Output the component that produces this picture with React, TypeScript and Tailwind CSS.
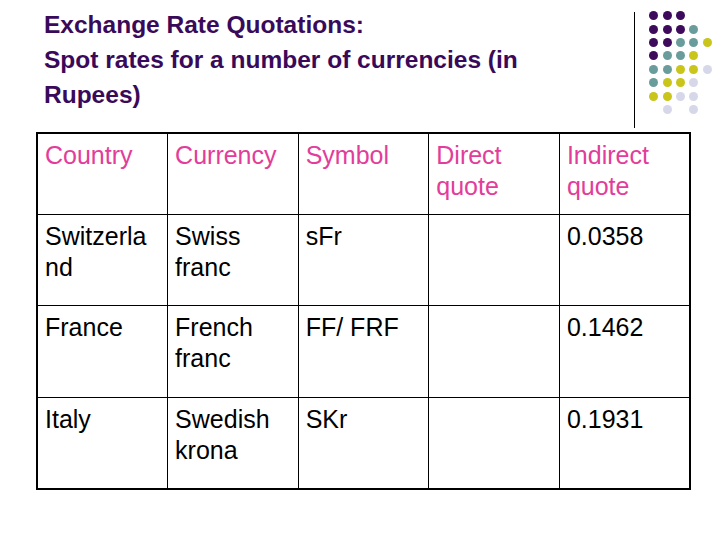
import React from "react";

// P = purple, T = teal, Y = yellow, L = lavender, _ = empty
const dotRows = [
  "PPP__",
  "PPPT_",
  "PPTTY",
  "PTTY_",
  "TTYYL",
  "TYYL_",
  "YYLL_",
  "_L_L_",
];

const dotColor: Record<string, string> = {
  P: "bg-[#3d0a5c]",
  T: "bg-[#6a9c9c]",
  Y: "bg-[#c9c51a]",
  L: "bg-[#d7d7ea]",
  _: "bg-transparent",
};

const header = ["Country", "Currency", "Symbol", "Direct quote", "Indirect quote"];

const rows = [
  ["Switzerland", "Swiss franc", "sFr", "", "0.0358"],
  ["France", "French franc", "FF/ FRF", "", "0.1462"],
  ["Italy", "Swedish krona", "SKr", "", "0.1931"],
];

function Dots() {
  return (
    <div className="grid grid-cols-[repeat(5,13.4px)] auto-rows-[13.4px] mt-[9px] ml-[12px]">
      {dotRows.flatMap((row, r) =>
        row.split("").map((c, i) => (
          <div key={`${r}-${i}`} className="flex items-center justify-center">
            <span className={`block w-[9px] h-[9px] rounded-full ${dotColor[c]}`} />
          </div>
        ))
      )}
    </div>
  );
}

export default function App() {
  return (
    <div
      className="w-[728px] h-[546px] bg-white overflow-hidden"
      style={{ fontFamily: '"Liberation Sans", Arial, sans-serif' }}
    >
      {/* title + decoration */}
      <div className="flex h-[132px]">
        <h1 className="pl-[44px] pt-[7px] w-[590px] text-[24.5px] leading-[35px] font-bold text-[#3a0a5a]">
          Exchange Rate Quotations:
          <br />
          Spot rates for a number of currencies (in Rupees)
        </h1>
        <div className="mt-[12px] ml-[44px] w-[1px] h-[116px] bg-black" />
        <Dots />
      </div>

      <table className="ml-[36px] w-[655px] table-fixed border-collapse border-2 border-black text-[25px] leading-[31px]">
        <thead>
          <tr className="h-[81px]">
            {header.map((h) => (
              <th
                key={h}
                className="border border-black align-top text-left font-normal text-[#e23d9a] pl-[7px] pr-[10px] pt-[6px]"
              >
                {h}
              </th>
            ))}
          </tr>
        </thead>
        <tbody>
          {rows.map((row, i) => (
            <tr key={i} className={i === 0 ? "h-[91px]" : "h-[92px]"}>
              {row.map((cell, j) => (
                <td
                  key={j}
                  className="border border-black align-top text-black pl-[7px] pr-[10px] pt-[6px] [overflow-wrap:anywhere]"
                >
                  {cell}
                </td>
              ))}
            </tr>
          ))}
        </tbody>
      </table>
    </div>
  );
}
